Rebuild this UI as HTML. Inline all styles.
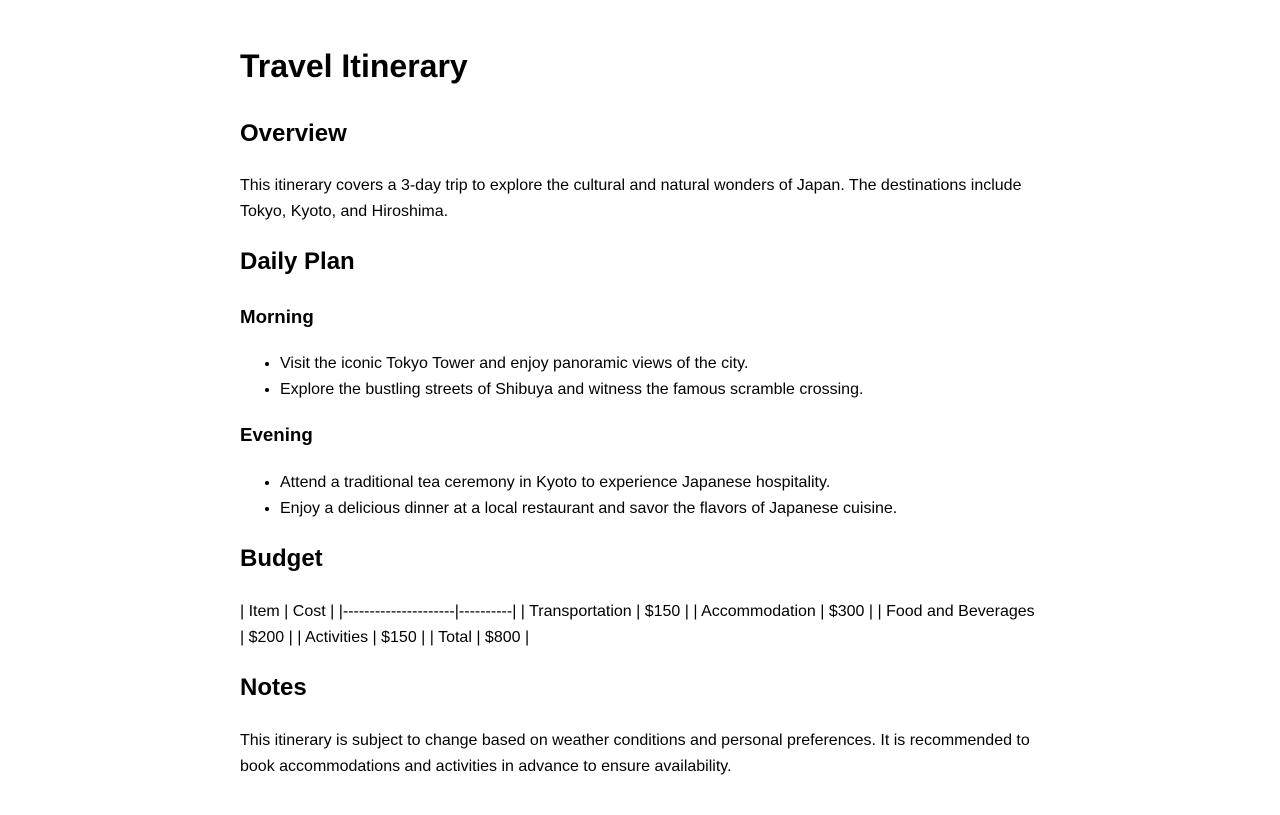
<!DOCTYPE html>
<html><head><meta charset="utf-8"><style>
html,body{margin:0;padding:0;background:#fff;}
body{font-family:"Liberation Sans",Arial,sans-serif;color:#000;font-size:16px;}
.c{position:absolute;left:240px;top:0;width:800px;}
h1,h2,h3,p,ul{margin:0;}
h1{font-size:32px;line-height:38.4px;margin-top:47px;}
h2{font-size:24px;line-height:28.8px;margin-top:24px;}
h3{font-size:18.72px;line-height:22.5px;margin-top:29px;}
p{line-height:25.6px;}
li{line-height:26px;}
p{margin-top:24px;}
ul{padding-left:40px;margin-top:22px;}
</style></head><body><div class="c">
<h1>Travel Itinerary</h1>
<h2 style="margin-top:35px">Overview</h2>
<p>This itinerary covers a 3-day trip to explore the cultural and natural wonders of Japan. The destinations include Tokyo, Kyoto, and Hiroshima.</p>
<h2>Daily Plan</h2>
<h3>Morning</h3>
<ul><li>Visit the iconic Tokyo Tower and enjoy panoramic views of the city.</li><li>Explore the bustling streets of Shibuya and witness the famous scramble crossing.</li></ul>
<h3 style="margin-top:21px">Evening</h3>
<ul style="margin-top:24px"><li>Attend a traditional tea ceremony in Kyoto to experience Japanese hospitality.</li><li>Enjoy a delicious dinner at a local restaurant and savor the flavors of Japanese cuisine.</li></ul>
<h2 style="margin-top:23px">Budget</h2>
<p style="margin-top:25px">| Item | Cost | |---------------------|----------| | Transportation | $150 | | Accommodation | $300 | | Food and Beverages | $200 | | Activities | $150 | | Total | $800 |</p>
<h2>Notes</h2>
<p style="margin-top:25.5px">This itinerary is subject to change based on weather conditions and personal preferences. It is recommended to book accommodations and activities in advance to ensure availability.</p>
</div></body></html>
